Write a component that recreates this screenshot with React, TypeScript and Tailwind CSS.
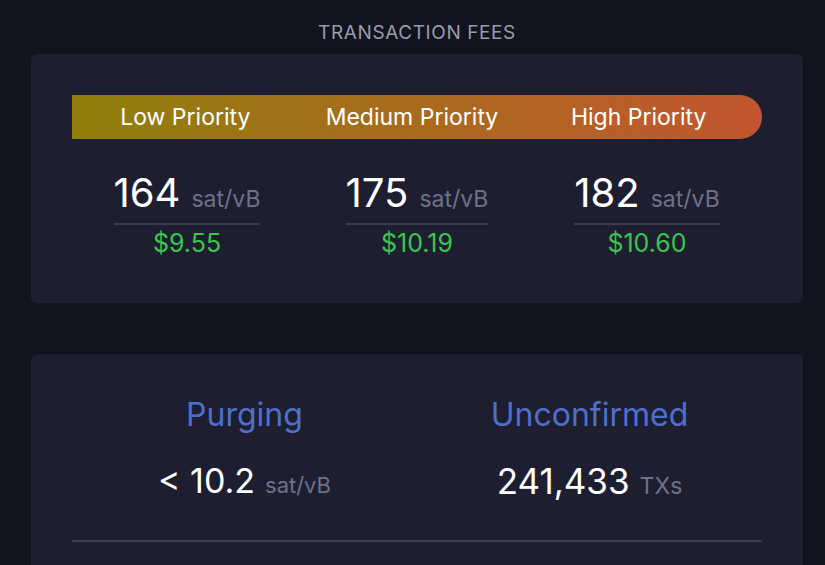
import React from "react";

const fees = [
  { label: "Low Priority", rate: 164, usd: "$9.55" },
  { label: "Medium Priority", rate: 175, usd: "$10.19" },
  { label: "High Priority", rate: 182, usd: "$10.60" },
];

const font = { fontFamily: "Inter, 'Noto Sans', sans-serif" };

const App = () => {
  return (
    <div
      className="min-h-screen bg-[#11131f] pl-[31px] pr-[22px] pt-[21px] overflow-hidden"
      style={font}
    >
      <h2 className="text-center text-[19px] leading-[24px] tracking-[0.6px] text-[#9a9cab] uppercase">
        Transaction Fees
      </h2>

      {/* 🔹 fee card */}
      <div className="mt-[9px] bg-[#1d1f31] rounded-md px-[41px] pt-[41px] pb-[45px]">
        <div className="h-[44px] rounded-r-full bg-gradient-to-r from-[#8e7f08] via-[#a96a1d] to-[#c2552f] grid grid-cols-3 items-center pr-[10px]">
          {fees.map((f) => (
            <div key={f.label} className="text-center text-white text-[23px]">
              {f.label}
            </div>
          ))}
        </div>

        <div className="grid grid-cols-3 mt-[30px]">
          {fees.map((f) => (
            <div key={f.label} className="flex flex-col items-center">
              <div className="flex items-baseline gap-[11px] leading-[48px] border-b-2 border-[#3a3c50]">
                <span className="text-[40px] text-white">{f.rate}</span>
                <span className="text-[23px] text-[#6f7186]">sat/vB</span>
              </div>
              <div className="text-[25px] leading-[30px] mt-[3px] text-[#3cc54c]">
                {f.usd}
              </div>
            </div>
          ))}
        </div>
      </div>

      {/* 🔹 mempool card */}
      <div className="mt-[51px] bg-[#1d1f31] rounded-md px-[41px] pt-[42px] pb-[60px]">
        <div className="grid grid-cols-2">
          <div className="flex flex-col items-center">
            <div className="text-[32px] leading-[38px] text-[#4f6fca]">Purging</div>
            <div className="mt-[26px] flex items-baseline gap-[10px] leading-[42px]">
              <span className="text-[34px] text-white">&lt; 10.2</span>
              <span className="text-[22px] text-[#6f7186]">sat/vB</span>
            </div>
          </div>
          <div className="flex flex-col items-center">
            <div className="text-[32px] leading-[38px] text-[#4f6fca]">Unconfirmed</div>
            <div className="mt-[26px] flex items-baseline gap-[10px] leading-[42px]">
              <span className="text-[35px] text-white">241,433</span>
              <span className="text-[23px] text-[#6f7186]">TXs</span>
            </div>
          </div>
        </div>
        <div className="mt-[33px] h-[2px] bg-[#3a3c50]" />
      </div>
    </div>
  );
};

export default App;
